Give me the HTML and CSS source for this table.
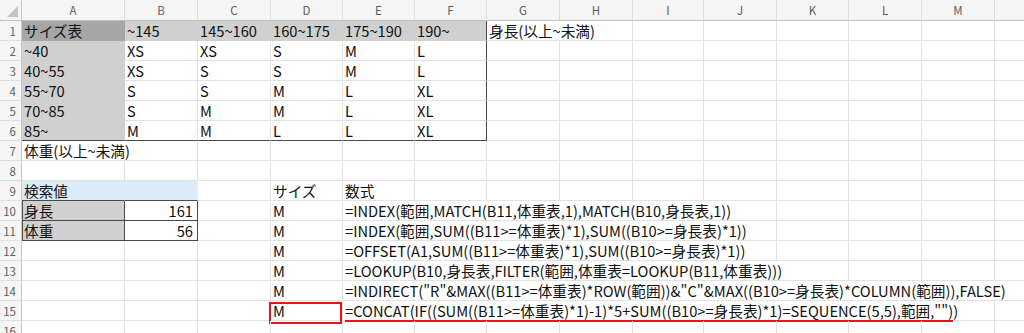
FILE: index.html
```html
<!DOCTYPE html>
<html lang="ja">
<head>
<meta charset="utf-8">
<title>サイズ表</title>
<link rel="stylesheet" href="styles.css">
</head>
<body>
<div class="sheet">
  <div class="row hdr">
    <div class="corner"><svg width="22" height="20" viewBox="0 0 22 20"><polygon points="18,6 18,17 7,17" fill="#c4c4c4"/></svg></div>
    <div class="ch">A</div><div class="ch">B</div><div class="ch">C</div><div class="ch">D</div><div class="ch">E</div><div class="ch">F</div><div class="ch">G</div><div class="ch">H</div><div class="ch">I</div><div class="ch">J</div><div class="ch">K</div><div class="ch">L</div><div class="ch">M</div><div class="ch"></div>
  </div>

  <div class="row">
    <div class="rh">1</div>
    <div class="c dk">サイズ表</div>
    <div class="c gr">~145</div>
    <div class="c gr">145~160</div>
    <div class="c gr">160~175</div>
    <div class="c gr">175~190</div>
    <div class="c gr tr">190~</div>
    <div class="c s2">身長(以上~未満)</div>
    <div class="c"></div><div class="c"></div><div class="c"></div><div class="c"></div><div class="c"></div><div class="c"></div>
  </div>

  <div class="row">
    <div class="rh">2</div>
    <div class="c gr">~40</div>
    <div class="c">XS</div><div class="c">XS</div><div class="c">S</div><div class="c">M</div><div class="c tr">L</div>
    <div class="c"></div><div class="c"></div><div class="c"></div><div class="c"></div><div class="c"></div><div class="c"></div><div class="c"></div><div class="c"></div>
  </div>

  <div class="row">
    <div class="rh">3</div>
    <div class="c gr">40~55</div>
    <div class="c">XS</div><div class="c">S</div><div class="c">S</div><div class="c">M</div><div class="c tr">L</div>
    <div class="c"></div><div class="c"></div><div class="c"></div><div class="c"></div><div class="c"></div><div class="c"></div><div class="c"></div><div class="c"></div>
  </div>

  <div class="row">
    <div class="rh">4</div>
    <div class="c gr">55~70</div>
    <div class="c">S</div><div class="c">S</div><div class="c">M</div><div class="c">L</div><div class="c tr">XL</div>
    <div class="c"></div><div class="c"></div><div class="c"></div><div class="c"></div><div class="c"></div><div class="c"></div><div class="c"></div><div class="c"></div>
  </div>

  <div class="row">
    <div class="rh">5</div>
    <div class="c gr">70~85</div>
    <div class="c">S</div><div class="c">M</div><div class="c">M</div><div class="c">L</div><div class="c tr">XL</div>
    <div class="c"></div><div class="c"></div><div class="c"></div><div class="c"></div><div class="c"></div><div class="c"></div><div class="c"></div><div class="c"></div>
  </div>

  <div class="row">
    <div class="rh">6</div>
    <div class="c gr tb">85~</div>
    <div class="c tb">M</div><div class="c tb">M</div><div class="c tb">L</div><div class="c tb">L</div><div class="c tb tr">XL</div>
    <div class="c"></div><div class="c"></div><div class="c"></div><div class="c"></div><div class="c"></div><div class="c"></div><div class="c"></div><div class="c"></div>
  </div>

  <div class="row">
    <div class="rh">7</div>
    <div class="c s2">体重(以上~未満)</div>
    <div class="c"></div><div class="c"></div><div class="c"></div><div class="c"></div><div class="c"></div><div class="c"></div><div class="c"></div><div class="c"></div><div class="c"></div><div class="c"></div><div class="c"></div><div class="c"></div>
  </div>

  <div class="row">
    <div class="rh">8</div>
    <div class="c"></div><div class="c"></div><div class="c"></div><div class="c"></div><div class="c"></div><div class="c"></div><div class="c"></div><div class="c"></div><div class="c"></div><div class="c"></div><div class="c"></div><div class="c"></div><div class="c"></div><div class="c"></div>
  </div>

  <div class="row">
    <div class="rh">9</div>
    <div class="c bl">検索値</div>
    <div class="c bl"></div>
    <div class="c"></div>
    <div class="c">サイズ</div>
    <div class="c">数式</div>
    <div class="c"></div><div class="c"></div><div class="c"></div><div class="c"></div><div class="c"></div><div class="c"></div><div class="c"></div><div class="c"></div><div class="c"></div>
  </div>

  <div class="row">
    <div class="rh">10</div>
    <div class="c gr box bl-left">身長</div>
    <div class="c box num">161</div>
    <div class="c"></div>
    <div class="c">M</div>
    <div class="c s6">=INDEX(範囲,MATCH(B11,体重表,1),MATCH(B10,身長表,1))</div>
    <div class="c"></div><div class="c"></div><div class="c"></div><div class="c"></div>
  </div>

  <div class="row">
    <div class="rh">11</div>
    <div class="c gr box bl-left">体重</div>
    <div class="c box num">56</div>
    <div class="c"></div>
    <div class="c">M</div>
    <div class="c s6">=INDEX(範囲,SUM((B11&gt;=体重表)*1),SUM((B10&gt;=身長表)*1))</div>
    <div class="c"></div><div class="c"></div><div class="c"></div><div class="c"></div>
  </div>

  <div class="row">
    <div class="rh">12</div>
    <div class="c"></div><div class="c"></div><div class="c"></div>
    <div class="c">M</div>
    <div class="c s6">=OFFSET(A1,SUM((B11&gt;=体重表)*1),SUM((B10&gt;=身長表)*1))</div>
    <div class="c"></div><div class="c"></div><div class="c"></div><div class="c"></div>
  </div>

  <div class="row">
    <div class="rh">13</div>
    <div class="c"></div><div class="c"></div><div class="c"></div>
    <div class="c">M</div>
    <div class="c s7">=LOOKUP(B10,身長表,FILTER(範囲,体重表=LOOKUP(B11,体重表)))</div>
    <div class="c"></div><div class="c"></div><div class="c"></div>
  </div>

  <div class="row">
    <div class="rh">14</div>
    <div class="c"></div><div class="c"></div><div class="c"></div>
    <div class="c">M</div>
    <div class="c s10">=INDIRECT("R"&amp;MAX((B11&gt;=体重表)*ROW(範囲))&amp;"C"&amp;MAX((B10&gt;=身長表)*COLUMN(範囲)),FALSE)</div>
  </div>

  <div class="row">
    <div class="rh">15</div>
    <div class="c"></div><div class="c"></div><div class="c"></div>
    <div class="c mark">M</div>
    <div class="c s9"><span class="uline">=CONCAT(IF((SUM((B11&gt;=体重表)*1)-1)*5+SUM((B10&gt;=身長表)*1)=SEQUENCE(5,5),範囲,""))</span></div>
    <div class="c"></div>
  </div>

  <div class="row">
    <div class="rh">16</div>
    <div class="c"></div><div class="c"></div><div class="c"></div><div class="c"></div><div class="c"></div><div class="c"></div><div class="c"></div><div class="c"></div><div class="c"></div><div class="c"></div><div class="c"></div><div class="c"></div><div class="c"></div><div class="c"></div>
  </div>
</div>
</body>
</html>
```

FILE: styles.css
```css
html, body {
  margin: 0;
  padding: 0;
  background: #ffffff;
  overflow: hidden;
}

body {
  width: 1024px;
  height: 333px;
  font-family: "Noto Sans CJK JP", "Noto Sans", sans-serif;
  font-size: 14.67px;
  color: #111111;
}

.sheet {
  width: 1068px;
}

.row {
  display: grid;
  grid-template-columns: 22px 103px 73px 73px 72px 72px 72px 73px 73px 71px 73px 72px 73px 73px 73px;
  height: 20px;
}

.row.hdr {
  height: 21px;
}

/* headers */
.corner {
  background: #f5f5f5;
  border-right: 1px solid #c8c8c8;
  border-bottom: 1px solid #c0c0c0;
  box-sizing: border-box;
  height: 21px;
}
.corner svg {
  display: block;
}

.ch {
  background: #f5f5f5;
  border-right: 1px solid #dcdcdc;
  border-bottom: 1px solid #c0c0c0;
  box-sizing: border-box;
  height: 21px;
  text-align: center;
  font-size: 11.5px;
  line-height: 21px;
  color: #5f5f5f;
}

.rh {
  background: #f5f5f5;
  border-right: 1px solid #c8c8c8;
  border-bottom: 1px solid #e0e0e0;
  box-sizing: border-box;
  height: 20px;
  text-align: right;
  padding-right: 5px;
  font-size: 11.5px;
  line-height: 21px;
  color: #5f5f5f;
}

/* cells */
.c {
  position: relative;
  box-sizing: border-box;
  height: 20px;
  border-right: 1px solid #e2e2e2;
  border-bottom: 1px solid #e2e2e2;
  padding-left: 2px;
  line-height: 19px;
  white-space: nowrap;
}

.s2 { grid-column: span 2; }
.s6 { grid-column: span 6; }
.s7 { grid-column: span 7; }
.s9 { grid-column: span 9; }
.s10 { grid-column: span 10; }

.dk {
  background: #a6a6a6;
  border-color: #a6a6a6;
}

.gr {
  background: #d0d0d0;
  border-color: #d0d0d0;
}

.bl {
  background: #ddebf7;
  border-right-color: #ddebf7;
  border-bottom: 1px solid #4a4a4a;
}

.tr {
  border-right: 1px solid #4a4a4a;
}

.tb {
  border-bottom: 1px solid #4a4a4a;
}

.box {
  border-right: 1px solid #4a4a4a;
  border-bottom: 1px solid #4a4a4a;
}

.bl-left {
  box-shadow: inset 1px 0 0 #4a4a4a;
}

.num {
  text-align: right;
  padding-left: 0;
  padding-right: 4px;
}

/* annotations */
.mark::after {
  content: "";
  position: absolute;
  left: -2px;
  top: 1px;
  width: 73px;
  height: 22px;
  border: 2px solid #e8141b;
  box-sizing: border-box;
}

.uline {
  position: relative;
  display: inline-block;
}
.uline::after {
  content: "";
  position: absolute;
  left: 0;
  right: 5px;
  top: 19px;
  height: 2px;
  background: #e8141b;
}
```
